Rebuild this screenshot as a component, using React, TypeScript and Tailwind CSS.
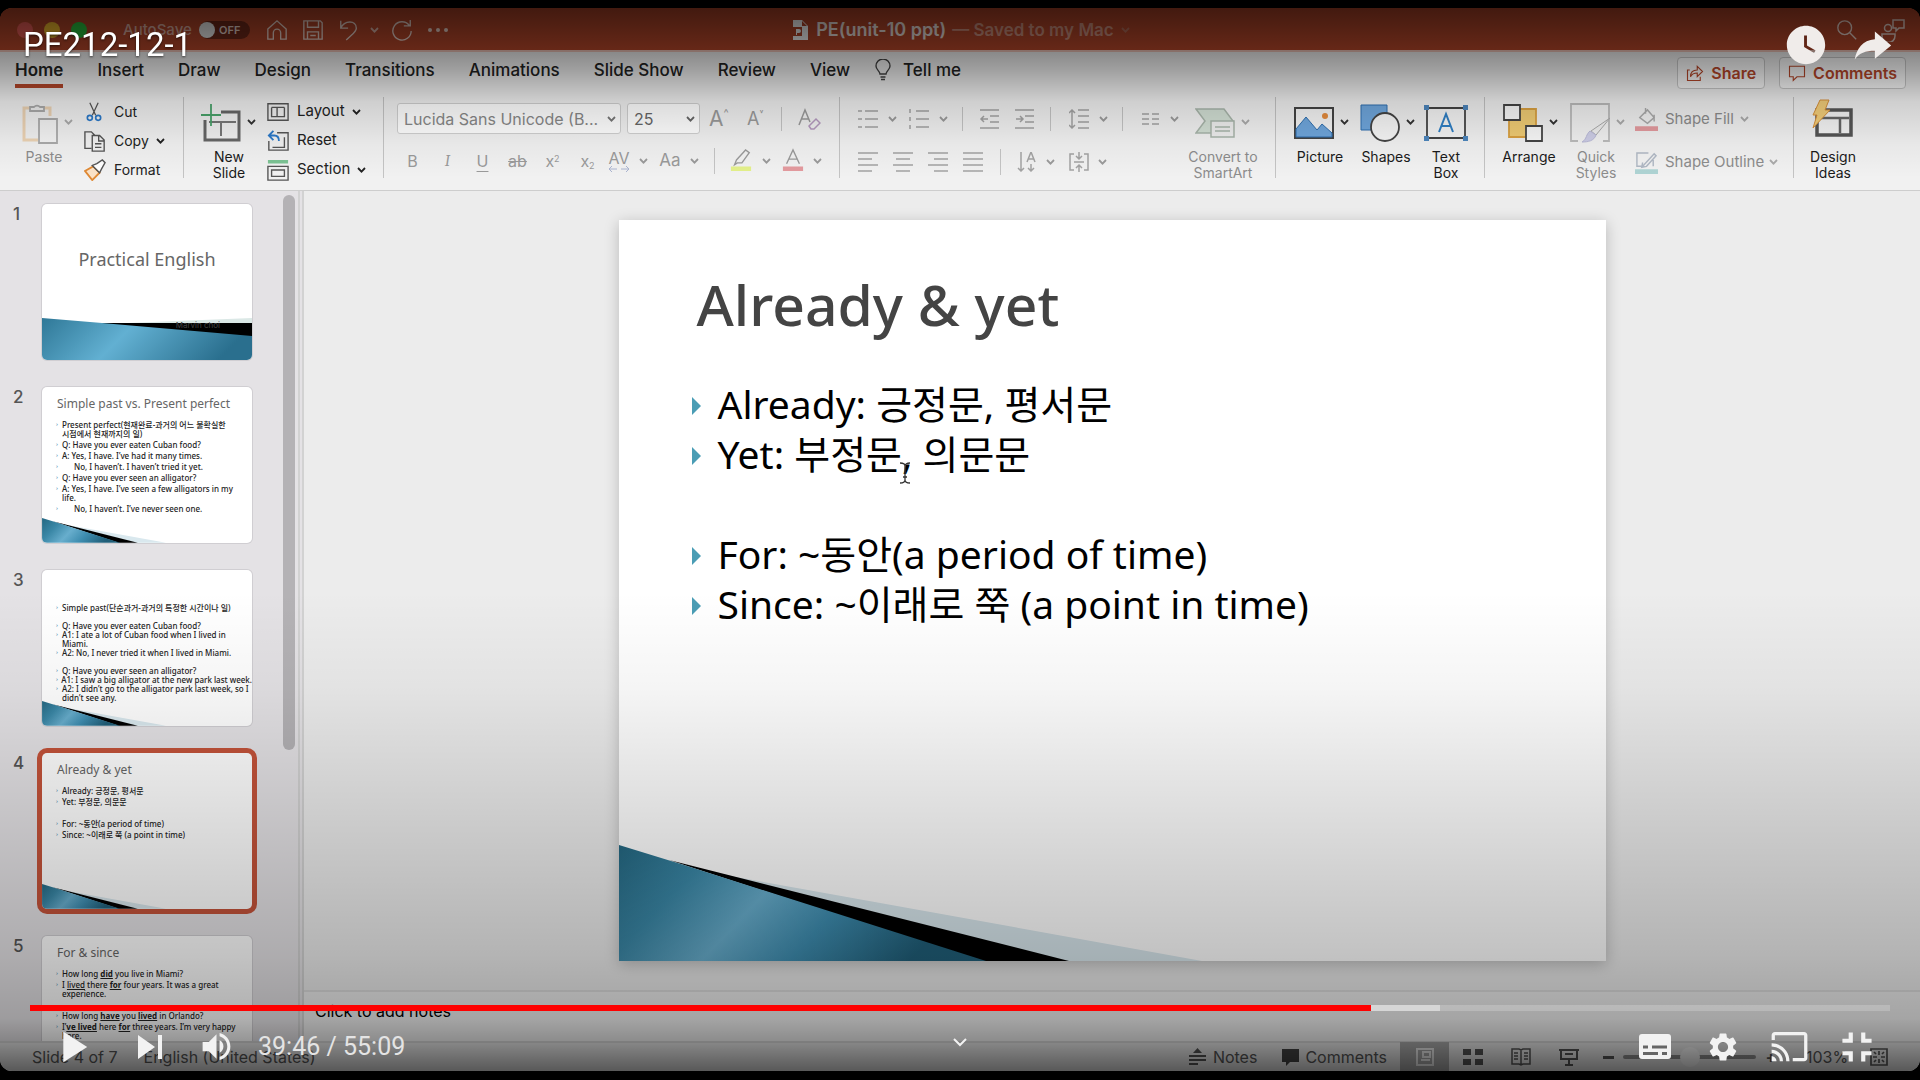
import React from "react";
import {
  MdPlayArrow,
  MdSkipNext,
  MdVolumeUp,
  MdSettings,
  MdCast,
  MdFullscreenExit,
  MdWatchLater,
} from "react-icons/md";

type Kids = { children?: React.ReactNode };

function Chev({ className = "text-[#444]" }: { className?: string }) {
  return (
    <svg viewBox="0 0 9 6" className={"h-[6px] w-[9px] shrink-0 " + className} fill="none" stroke="currentColor" strokeWidth="1.8">
      <path d="M1 1l3.5 3.6L8 1" />
    </svg>
  );
}

function Sep({ className = "" }: { className?: string }) {
  return <div className={"w-px shrink-0 bg-[#c4c4c4] " + className} />;
}

function Ico({ children, className }: Kids & { className: string }) {
  return (
    <svg viewBox="0 0 24 24" className={"shrink-0 " + className} fill="none" stroke="currentColor" strokeWidth="1.5">
      {children}
    </svg>
  );
}

/* ---------- Title bar ---------- */

function TitleBar() {
  return (
    <header className="grid h-[42px] shrink-0 grid-cols-[1fr_auto_1fr] items-center bg-[#b7472a] pt-[2px] pl-[17px] text-[#f0d8d0]">
      <div className="flex items-center">
        <div className="flex gap-[11px]">
          <button aria-label="Close" className="size-4 rounded-full bg-[#ee5f58]" />
          <button aria-label="Minimize" className="size-4 rounded-full bg-[#f5bd2e]" />
          <button aria-label="Zoom" className="size-4 rounded-full bg-[#2bc840]" />
        </div>
        <label htmlFor="autosave" className="ml-[36px] w-[66px] text-[15px] font-medium text-[#e0b0a4]">AutoSave</label>
        <span className="relative ml-[10px] flex h-[18px] w-[51px] items-center rounded-full bg-[#71291a] pr-2">
          <span className="size-4 rounded-full bg-[#f3f3f3]" />
          <span className="ml-1 text-[11px] font-semibold text-[#f0d8d0]">OFF</span>
          <input id="autosave" type="checkbox" className="absolute inset-0 size-full opacity-0" />
        </span>
        <button aria-label="Home" className="ml-[16px]">
          <Ico className="size-[22px]"><path d="M2 11L12 2l10 9v11h-6v-7a4 4 0 0 0-8 0v7H2z" /></Ico>
        </button>
        <button aria-label="Save" className="ml-[14px]">
          <Ico className="size-[22px]"><path d="M2 2h18l2 2v18H2zM6 2v7h12V2M6 22v-8h12v8M9 18h6" /></Ico>
        </button>
        <button aria-label="Undo" className="ml-[14px]">
          <Ico className="size-[22px]"><path d="M3 2v8h8M3 10c4-9 17-9 17 0 0 4-4 6-11 13" /></Ico>
        </button>
        <button aria-label="Undo history" className="ml-[10px]"><Chev className="text-[#e0b8ac]" /></button>
        <button aria-label="Redo" className="ml-[12px]">
          <Ico className="size-[22px]"><path d="M20 7A10 10 0 1 0 22 13M21 1v6.500h-7" /></Ico>
        </button>
        <button aria-label="More" className="ml-[15px] flex gap-[4px]">
          <i className="size-1 rounded-full bg-current" /><i className="size-1 rounded-full bg-current" /><i className="size-1 rounded-full bg-current" />
        </button>
      </div>
      <div className="flex items-center pr-[14px] text-lg font-semibold">
        <svg viewBox="0 0 16 20" className="mr-[7px] h-5 w-4" fill="#fff">
          <path fillRule="evenodd" d="M0 0h9l6 6v14H0v-4h9V7H0zM9 1v5h5z" />
          <path d="M3 9h3a2 2 0 0 1 0 4H4v2H3z" />
        </svg>
        <span className="text-[#f2e6e2]">PE(unit-10 ppt)</span>
        <span className="ml-[6px] text-[17px] text-[#d39482]">— Saved to my Mac</span>
        <Chev className="ml-[7px] text-[#b9705c]" />
      </div>
      <div className="flex items-center justify-end pr-[15px]">
        <button aria-label="Search"><Ico className="size-[22px]"><circle cx="9.500" cy="9.500" r="7.500" /><path d="M15 15l7 7" /></Ico></button>
        <button aria-label="Presence" className="ml-[23px]"><Ico className="size-6"><circle cx="7" cy="10" r="3.500" /><path d="M1 16h13v2a6 6 0 0 1-13 0zM12 2h11v8h-5l-3 3v-3h-3z" /></Ico></button>
      </div>
    </header>
  );
}

/* ---------- Ribbon ---------- */

const tabs = ["Home", "Insert", "Draw", "Design", "Transitions", "Animations", "Slide Show", "Review", "View"];

function TabRow() {
  return (
    <div className="flex h-[46px] items-start border-t-2 border-[#f0c4b8] pl-[15px] pr-[14px] text-[#222]">
      <nav className="flex gap-[34px] pt-[6px] text-[17px] leading-6 font-medium">
        {tabs.map((t) => (
          <button key={t} className={t === "Home" ? "border-b-4 border-[#b7472a] pb-[2px] font-semibold" : "pb-[6px]"}>{t}</button>
        ))}
      </nav>
      <button className="ml-[25px] flex items-center pt-[6px] text-[17px] leading-6 font-medium">
        <svg viewBox="0 0 16 22" className="mr-[12px] h-[22px] w-4" fill="none" stroke="#444" strokeWidth="1.4">
          <path d="M5 15c0-3-4-4-4-8a7 7 0 0 1 14 0c0 4-4 5-4 8zM5.500 18h5M6 20.500h4" />
        </svg>
        Tell me
      </button>
      <div className="ml-auto flex gap-[14px] pt-[5px] text-base font-semibold text-[#b7472a]">
        <button className="flex h-[32px] items-center gap-[7px] rounded border border-[#c9c9c9] bg-[#fbfbfb] px-[8px]">
          <Ico className="size-[18px]"><path d="M5 8H2v14h17v-5M6 17c0-7 4-9 9-9V3l7 7-7 7v-5c-4 0-7 1-9 5z" /></Ico>
          Share
        </button>
        <button className="flex h-[32px] items-center gap-[7px] rounded border border-[#c9c9c9] bg-[#fbfbfb] px-[8px]">
          <Ico className="size-[18px]"><path d="M2 3h20v14H12l-5 5v-5H2z" /></Ico>
          Comments
        </button>
      </div>
    </div>
  );
}

function SmallCmd({ label, icon, menu }: { label: string; icon: React.ReactNode; menu?: boolean }) {
  return (
    <button className="flex h-[29px] items-center text-[#222]">
      <span className="flex w-[30px] shrink-0">{icon}</span>
      {label}
      {menu && <Chev className="ml-[7px]" />}
    </button>
  );
}

function BigCmd({ label, icon, menu, dim, className = "" }: { label: string; icon: React.ReactNode; menu?: boolean; dim?: boolean; className?: string }) {
  return (
    <button className={"flex flex-col items-center " + (dim ? "text-[#8c8c8c] " : "text-[#1a1a1a] ") + className}>
      <span className="relative flex h-[53px] items-center">
        {icon}
        {menu && <Chev className={"absolute top-[23px] left-full ml-[6px] " + (dim ? "text-[#aaa]" : "text-[#333]")} />}
      </span>
      <span className="w-min text-center text-sm leading-4 whitespace-pre">{label}</span>
    </button>
  );
}

function Lines({ d, className = "" }: { d: string; className?: string }) {
  return (
    <svg viewBox="0 0 20 20" className={"size-5 shrink-0 " + className} fill="none" stroke="#a3a3a3" strokeWidth="1.500">
      <path d={d} />
    </svg>
  );
}

function Gch({ className }: { className: string }) {
  return <button aria-label="Options" className={className}><Chev className="text-[#9a9a9a]" /></button>;
}

function ToolRow() {
  return (
    <div className="flex h-[95px] items-start border-b border-[#cdcdcd] pl-[22px] text-[15px] whitespace-nowrap">
      {/* Clipboard */}
      <BigCmd
        label="Paste" dim menu className="w-[44px]"
        icon={<svg viewBox="0 0 36 42" className="-ml-2 h-[42px] w-9" fill="none" strokeWidth="1.800"><path d="M10 6H2v32h14M22 6h6v8" stroke="#ecd3b4" strokeWidth="3" /><path d="M8 9V5h4a4 4 0 0 1 6 0h4v4z" stroke="#aaa" fill="#eee" /><path d="M17 17h18v24H17z" stroke="#aaa" fill="#f3f3f3" /></svg>}
      />
      <div className="ml-[18px] w-[99px] pt-px text-sm">
        <SmallCmd label="Cut" icon={<Ico className="size-[20px]"><path d="M7 1l7 15M17 1l-7 15" stroke="#555" /><circle cx="7" cy="19" r="3" stroke="#2b79c9" strokeWidth="2" /><circle cx="17" cy="19" r="3" stroke="#2b79c9" strokeWidth="2" /></Ico>} />
        <SmallCmd label="Copy" menu icon={<Ico className="size-[22px]"><path d="M8 20H1V2h7l4 4M9 6h8l5 5v12H9zM16 6v6h6M12 15h7M12 19h7" stroke="#555" /></Ico>} />
        <SmallCmd label="Format" icon={<Ico className="size-[22px]"><path d="M1 13l8 10 8-8-7-7z" stroke="#e08a35" fill="#fbe3c8" strokeWidth="2" /><path d="M9 7l8 8 2-4 4-7-3-3-6 4z" stroke="#555" fill="#fff" /></Ico>} />
      </div>
      <Sep className="mt-px h-[81px]" />
      {/* Slides */}
      <BigCmd
        label={"New\nSlide"} menu className="ml-[15px] w-[60px]"
        icon={<svg viewBox="0 0 40 38" className="-ml-4 h-[38px] w-10" fill="none"><path d="M20 8h18v28H4V16" stroke="#666" strokeWidth="3" /><path d="M8 18h27M20 18v14" stroke="#777" strokeWidth="2" /><path d="M10 0v22M0 11h20" stroke="#49a36a" strokeWidth="1.800" /></svg>}
      />
      <div className="ml-[8px] w-[116px] pt-px">
        <SmallCmd label="Layout" menu icon={<Ico className="size-[22px]"><path d="M1 3h22v18H1zM5 7h14M5 7v10h14V7M11 7v10" stroke="#555" /></Ico>} />
        <SmallCmd label="Reset" icon={<Ico className="size-[22px]"><path d="M11 3h12v19H2V12M6 19h13V8" stroke="#555" /><path d="M7 1L2 6l5 5M2 6h6c4 0 5 2 5 6" stroke="#2b79c9" strokeWidth="2" /></Ico>} />
        <SmallCmd label="Section" menu icon={<Ico className="size-[22px]"><path d="M1 1h22v4H1z" fill="#7cc394" stroke="none" /><path d="M1 8h22v15H1zM5 12h14v7H5z" stroke="#555" /></Ico>} />
      </div>
      <Sep className="mt-px h-[81px]" />
      {/* Font */}
      <div className="flex w-[455px] flex-col gap-[13px] pt-[7px] pl-[13px] text-[#9a9a9a]">
        <div className="flex h-[31px] items-center">
          <span className="relative h-full w-[224px]">
            <select aria-label="Font" className="h-full w-full appearance-none rounded-[3px] border border-[#d0d0d0] bg-white px-[6px] text-base text-[#888]">
              <option>Lucida Sans Unicode (B...</option>
            </select>
            <Chev className="pointer-events-none absolute top-[13px] right-[5px] text-[#777]" />
          </span>
          <span className="relative ml-[6px] h-full w-[73px]">
            <select aria-label="Font size" className="h-full w-full appearance-none rounded-[3px] border border-[#d0d0d0] bg-white px-[6px] text-base text-[#666]">
              <option>25</option>
            </select>
            <Chev className="pointer-events-none absolute top-[13px] right-[5px] text-[#666]" />
          </span>
          <button aria-label="Increase font size" className="ml-[9px] flex w-[22px] text-[21px] leading-6">A<span className="text-[11px] leading-3">^</span></button>
          <button aria-label="Decrease font size" className="ml-[16px] flex w-[20px] text-[18px] leading-6">A<span className="text-[9px] leading-3">˅</span></button>
          <Sep className="ml-[14px] h-[24px]" />
          <button aria-label="Clear formatting" className="ml-[15px]">
            <Ico className="size-[24px]"><path d="M2 18L8 3l5 12M4 12h8" /><path d="M12 19l7-7 4 4-6 6h-3z" stroke="#b59abf" /></Ico>
          </button>
        </div>
        <div className="flex h-[27px] items-center text-base">
          <div className="-ml-[2px] grid grid-cols-[repeat(6,35px)]">
            <button>B</button>
            <button className="font-serif italic">I</button>
            <button className="underline underline-offset-4">U</button>
            <button className="line-through">ab</button>
            <button>x<sup className="text-[9px]">2</sup></button>
            <button>x<sub className="text-[9px]">2</sub></button>
          </div>
          <button aria-label="Character spacing" className="ml-[2px] flex w-[24px] flex-col items-center text-base leading-4">
            AV
            <svg viewBox="0 0 22 6" className="h-[6px] w-[22px]" fill="none" stroke="#aab4d0"><path d="M4 0L1 3l3 3M1 3h8M18 0l3 3-3 3M21 3h-8" /></svg>
          </button>
          <Gch className="ml-[8px]" />
          <button aria-label="Change case" className="ml-[10px] w-[24px] text-[17px]">Aa</button>
          <Gch className="ml-[8px]" />
          <Sep className="ml-[15px] h-[26px]" />
          <button aria-label="Highlight" className="ml-[15px]">
            <Ico className="h-[26px] w-[22px]"><path d="M7 11L17 0l4 3-8 11H8l-3 2z" /><path d="M1 18h22v5H1z" fill="#e3f08a" stroke="none" /></Ico>
          </button>
          <Gch className="ml-[10px]" />
          <button aria-label="Font color" className="ml-[11px]">
            <Ico className="h-[26px] w-[22px]"><path d="M5 15L12 0l7 15M7 10h10" /><path d="M1 18h22v5H1z" fill="#e39a9e" stroke="none" /></Ico>
          </button>
          <Gch className="ml-[9px]" />
        </div>
      </div>
      <Sep className="mt-px h-[81px]" />
      {/* Paragraph */}
      <div className="flex w-[347px] flex-col gap-[17px] pt-[10px] pl-[18px]">
        <div className="flex h-[26px] items-center">
          <Lines d="M0 2h4M0 10h4M0 18h4M7 2h13M7 10h13M7 18h13" />
          <Gch className="ml-[10px]" />
          <Lines d="M1 0v4M1 8v4M1 16v4M7 2h13M7 10h13M7 18h13" className="ml-[12px]" />
          <Gch className="ml-[10px]" />
          <Sep className="ml-[14px] h-[24px]" />
          <Lines d="M1 1h19M11 7h9M11 13h9M1 19h19M9 10H2M5 7l-3 3 3 3" className="ml-[16px]" />
          <Lines d="M1 1h19M11 7h9M11 13h9M1 19h19M2 10h7M6 7l3 3-3 3" className="ml-[15px]" />
          <Sep className="ml-[16px] h-[24px]" />
          <Lines d="M9 1h11M9 7h11M9 13h11M9 19h11M3 1v18M0 4l3-3 3 3M0 16l3 3 3-3" className="ml-[18px]" />
          <Gch className="ml-[10px]" />
          <Sep className="ml-[14px] h-[24px]" />
          <Lines d="M2 5h7M2 10h7M2 15h7M12 5h7M12 10h7M12 15h7" className="ml-[17px]" />
          <Gch className="ml-[10px]" />
        </div>
        <div className="flex h-[26px] items-center">
          <Lines d="M0 1h20M0 7h14M0 13h20M0 19h14" />
          <Lines d="M0 1h20M3 7h14M0 13h20M3 19h14" className="ml-[15px]" />
          <Lines d="M0 1h20M6 7h14M0 13h20M6 19h14" className="ml-[15px]" />
          <Lines d="M0 1h20M0 7h20M0 13h20M0 19h20" className="ml-[15px]" />
          <Sep className="ml-[17px] h-[26px]" />
          <Lines d="M4 0v19M1 16l3 3 3-3M10 10l4-10 4 10M11 7h6M14 12v7M11 16l3 3 3-3" className="ml-[16px]" />
          <Gch className="ml-[9px]" />
          <Lines d="M5 2H1v16h4M15 2h4v16h-4M10 0v7M10 13v7M5 10h10M7 4l3 3 3-3M7 16l3-3 3 3" className="ml-[14px]" />
          <Gch className="ml-[9px]" />
        </div>
      </div>
      <BigCmd
        label={"Convert to\nSmartArt"} dim menu className="w-[72px]"
        icon={<svg viewBox="0 0 40 32" className="-ml-4 h-8 w-10" fill="#d2dfd4" stroke="#a8b5aa" strokeWidth="1.500"><path d="M1 2h28l9 12-9 12H1l9-12z" /><path d="M16 14h23v16H16z" fill="#eee" /><path d="M20 20h15M20 24h15" /></svg>}
      />
      <Sep className="mt-px ml-[16px] h-[81px]" />
      {/* Insert */}
      <BigCmd
        label="Picture" menu className="ml-[19px] w-[50px]"
        icon={<svg viewBox="0 0 40 32" className="-ml-3 h-8 w-10" fill="none"><path d="M1 1h38v30H1z" stroke="#444" strokeWidth="2" fill="#f4f4f4" /><path d="M2 22L12 10l11 13 5-6 10 9v4H2z" fill="#6fa6dc" stroke="#2f6faf" /><circle cx="31" cy="9" r="3" fill="#e58c3e" /></svg>}
      />
      <BigCmd
        label="Shapes" menu className="ml-[14px] w-[54px]"
        icon={<svg viewBox="0 0 40 38" className="-ml-3 h-[38px] w-10"><path d="M1 1h26v25H1z" fill="#6fa6dc" stroke="#2f6faf" /><circle cx="25" cy="23" r="14" fill="#f6f6f6" stroke="#444" strokeWidth="1.800" /></svg>}
      />
      <BigCmd
        label={"Text\nBox"} className="ml-[10px] w-[46px]"
        icon={<svg viewBox="0 0 44 36" className="h-9 w-11"><path d="M3 3h38v30H3z" fill="#f4f4f4" stroke="#444" strokeWidth="1.800" /><path d="M15 27l7-18 7 18M17 21h10" fill="none" stroke="#2f7fc4" strokeWidth="2" /><path d="M0 0h5v5H0zM39 0h5v5h-5zM0 31h5v5H0zM39 31h5v5h-5z" fill="#4d86bd" /></svg>}
      />
      <Sep className="mt-px ml-[15px] h-[81px]" />
      {/* Drawing */}
      <BigCmd
        label="Arrange" menu className="ml-[17px] w-[54px]"
        icon={<svg viewBox="0 0 40 38" className="-ml-3 h-[38px] w-10" strokeWidth="1.800"><path d="M6 5h27v28H6z" fill="#efcb73" stroke="#d9a040" /><path d="M1 1h16v15H1zM23 22h16v15H23z" fill="#f8f8f8" stroke="#444" /></svg>}
      />
      <BigCmd
        label={"Quick\nStyles"} dim menu className="ml-[19px] w-[42px]"
        icon={<svg viewBox="0 0 40 40" className="-ml-3 h-10 w-10"><path d="M8 38H1V1h38v37h-6" fill="none" stroke="#bbb" strokeWidth="1.800" /><path d="M40 15L26 32l-5-4z" fill="#eee" stroke="#aaa" /><path d="M20 28l6 4c-2 6-8 7-14 7 5-3 4-8 8-11z" fill="#cdcde6" stroke="#b9b9d6" /></svg>}
      />
      <div className="ml-[18px] flex w-[158px] flex-col gap-[9px] pt-[6px] text-[#8c8c8c]">
        <button className="flex h-[34px] items-center">
          <svg viewBox="0 0 24 24" className="mr-[7px] size-[23px]" fill="none" stroke="#aaa" strokeWidth="1.500"><path d="M5 10l8-8 7 8-7 6zM11 0v6M20 7v7" /><path d="M0 19h24v5H0z" fill="#e39a9e" stroke="none" /></svg>
          Shape Fill <Chev className="ml-[6px] text-[#aaa]" />
        </button>
        <button className="flex h-[34px] items-center">
          <svg viewBox="0 0 24 24" className="mr-[7px] size-[23px]" fill="none" stroke="#b0b8c4" strokeWidth="1.500"><path d="M14 2H2v14h6l12-13 2 2-10 11-5 1 1-5M19 8v8" /><path d="M0 19h24v5H0z" fill="#aed3d3" stroke="none" /></svg>
          Shape Outline <Chev className="ml-[5px] text-[#aaa]" />
        </button>
      </div>
      <Sep className="mt-px h-[81px]" />
      <BigCmd
        label={"Design\nIdeas"} className="ml-[14px] w-[50px]"
        icon={<svg viewBox="0 0 42 40" className="-mt-2 h-10 w-[42px]"><path d="M5 11h34v25H5z" fill="#f4f4f4" stroke="#555" strokeWidth="3.500" /><path d="M9 19h28M28 19v15" stroke="#666" strokeWidth="2.500" /><path d="M8 1h9l-4 10h5L1 29l4-13H1z" fill="#f5cf7a" stroke="#d9913a" /></svg>}
      />
    </div>
  );
}

/* ---------- Slides ---------- */

function Corner({ id }: { id: string }) {
  return (
    <svg viewBox="0 0 987 116" className="absolute bottom-0 left-0 w-full">
      <defs>
        <linearGradient id={id} x1="0" y1="0" x2="1" y2="0.3">
          <stop offset="0" stopColor="#246781" />
          <stop offset="0.25" stopColor="#3a87a6" />
          <stop offset="0.48" stopColor="#68aecd" />
          <stop offset="0.7" stopColor="#3e8db0" />
          <stop offset="1" stopColor="#205e78" />
        </linearGradient>
      </defs>
      <path d="M100 29L583 116H440z" fill="#d9e8ee" />
      <path d="M50 15L450 116H360z" fill="#000" />
      <path d="M0 0L65 20L367 116H0z" fill={`url(#${id})`} />
    </svg>
  );
}

function Thumb({ n, selected, children }: Kids & { n: number; selected?: boolean }) {
  return (
    <li className="flex h-[183px] shrink-0">
      <span className="w-[42px] pr-1 pl-[13px] text-[17px] leading-5 font-medium text-[#555]">{n}</span>
      <button
        className={
          "relative block h-[156px] w-[210px] shrink-0 overflow-hidden rounded-[5px] bg-white text-left ring-offset-0 " +
          (selected ? "ring-[5px] ring-[#c4533a]" : "ring-1 ring-[#d0ced2]")
        }
      >
        {children}
      </button>
    </li>
  );
}

function ThumbText({ title, gap, lines, id }: { title?: string; gap?: boolean; lines: React.ReactNode[]; id: string }) {
  return (
    <span className="block h-full font-['Noto_Sans','Noto_Sans_CJK_KR',sans-serif]">
      <Corner id={id} />
      <span className="relative block h-[33px] pt-[9px] pl-[15px] text-[12px] leading-4 whitespace-nowrap text-[#666]">{title}</span>
      <span className={"relative flex flex-col pl-[14px] text-[8px] leading-[9px] font-medium whitespace-nowrap text-[#222] " + (gap ? "gap-[2px]" : "")}>
        {lines.map((l, i) => (
          <span key={i} className="flex min-h-[9px]">
            <span className="w-[6px] text-[6px] text-[#58a]">{l ? "›" : ""}</span>
            <span>{l}</span>
          </span>
        ))}
      </span>
    </span>
  );
}

function Sidebar() {
  return (
    <aside className="flex w-[304px] shrink-0 overflow-hidden border-r-[6px] border-double border-[#d2d2d2] bg-[#e4e2e5]">
      <ol className="flex flex-1 flex-col pt-[13px]">
        <Thumb n={1}>
          <span className="block h-full pt-[43px] text-center font-['Noto_Sans',sans-serif] text-lg leading-6 text-[#666]">Practical English</span>
          <svg viewBox="0 0 210 42" className="absolute bottom-0 left-0 w-full">
            <defs>
              <linearGradient id="cover" x1="0" y1="0" x2="1" y2="0.200">
                <stop offset="0" stopColor="#2f7897" />
                <stop offset="0.450" stopColor="#62b0d2" />
                <stop offset="1" stopColor="#2a6f8e" />
              </linearGradient>
            </defs>
            <path d="M60 6L210 0v8z" fill="#dbe8e6" />
            <path d="M50 5L210 5v14z" fill="#000" />
            <path d="M0 0L60 5L210 18V42H0z" fill="url(#cover)" />
          </svg>
          <span className="absolute right-[32px] bottom-[30px] text-[8px] leading-[9px] text-[#444]">Marvin choi</span>
        </Thumb>
        <Thumb n={2}>
          <ThumbText
            id="c2" gap title="Simple past vs. Present perfect"
            lines={[
              <>Present perfect(현재완료-과거의 어느 불확실한<br />시점에서 현재까지의 일)</>,
              "Q: Have you ever eaten Cuban food?",
              "A: Yes, I have. I’ve had it many times.",
              <span className="pl-3">No, I haven’t. I haven’t tried it yet.</span>,
              "Q: Have you ever seen an alligator?",
              <>A: Yes, I have. I’ve seen a few alligators in my<br />life.</>,
              <span className="pl-3">No, I haven’t. I’ve never seen one.</span>,
            ]}
          />
        </Thumb>
        <Thumb n={3}>
          <ThumbText
            id="c3"
            lines={[
              "Simple past(단순과거-과거의 특정한 시간이나 일)",
              "",
              "Q: Have you ever eaten Cuban food?",
              <>A1: I ate a lot of Cuban food when I lived in<br />Miami.</>,
              "A2: No, I never tried it when I lived in Miami.",
              "",
              "Q: Have you ever seen an alligator?",
              "A1: I saw a big alligator at the new park last week.",
              <>A2: I didn’t go to the alligator park last week, so I<br />didn’t see any.</>,
            ]}
          />
        </Thumb>
        <Thumb n={4} selected>
          <ThumbText
            id="c4" gap title="Already & yet"
            lines={["Already: 긍정문, 평서문", "Yet: 부정문, 의문문", "", "For: ~동안(a period of time)", "Since: ~이래로 쭉 (a point in time)"]}
          />
        </Thumb>
        <Thumb n={5}>
          <ThumbText
            id="c5" gap title="For & since"
            lines={[
              <>How long <b><u>did</u></b> you live in Miami?</>,
              <>I <u>lived</u> there <b><u>for</u></b> four years. It was a great<br />experience.</>,
              "",
              <>How long <b><u>have</u></b> you <b><u>lived</u></b> in Orlando?</>,
              <>I’<b><u>ve lived</u></b> here <b><u>for</u></b> three years. I’m very happy<br />here.</>,
            ]}
          />
        </Thumb>
      </ol>
      <div className="mt-[4px] mr-[3px] h-[555px] w-[12px] rounded-full bg-[#b4b2b5]" />
    </aside>
  );
}

const bullets = ["Already: 긍정문, 평서문", "Yet: 부정문, 의문문", "", "For: ~동안(a period of time)", "Since: ~이래로 쭉 (a point in time)"];

function Workspace() {
  return (
    <main className="flex min-w-0 flex-1 flex-col bg-[#ececec]">
      <div className="flex min-h-0 flex-1 justify-center pt-[29px] pb-[29px]">
        <article className="relative aspect-[987/741] h-full bg-white pl-[73px] font-['Noto_Sans','Noto_Sans_CJK_KR',sans-serif] whitespace-nowrap shadow-[0_3px_14px_rgba(0,0,0,0.22)]">
          <Corner id="main" />
          <h1 className="relative pt-[48px] pl-[5px] text-[57px] leading-[72px] font-medium text-[#444]">Already &amp; yet</h1>
          <ul className="relative pt-[39px] text-[39px] leading-[50px] text-black">
            {bullets.map((b, i) => (
              <li key={i} className="flex h-[50px] items-center">
                {b && (
                  <svg viewBox="0 0 9 18" className="mt-[4px] mr-[17px] h-[18px] w-[9px]"><path d="M0 0l9 9-9 9z" fill="#4a9db5" /></svg>
                )}
                {b}
              </li>
            ))}
          </ul>
          <svg viewBox="0 0 10 22" className="absolute top-[242px] left-[281px] h-[22px] w-[10px]" fill="none" stroke="#333" strokeWidth="1.300">
            <path d="M0 1c3 0 5 1 5 3 0-2 2-3 5-3M5 3v16M0 21c3 0 5-1 5-3 0 2 2 3 5 3M3 15h4" />
          </svg>
        </article>
      </div>
      <div className="h-[51px] shrink-0 border-t-2 border-[#dedede] bg-[#efefef] pt-[7px] pl-[11px]">
        <input aria-label="Notes" defaultValue="Click to add notes" className="w-full bg-transparent text-base text-black outline-none" />
      </div>
    </main>
  );
}

function StatusBar() {
  return (
    <footer className="flex h-[30px] shrink-0 items-center border-t-2 border-[#d6d6d6] bg-[#e9e9e9] pr-[32px] pl-[32px] text-base text-[#555]">
      <span>Slide 4 of 7</span>
      <span className="ml-[26px]">English (United States)</span>
      <button className="ml-auto flex items-center gap-[7px]">
        <svg viewBox="0 0 17 18" className="h-[18px] w-[17px]" fill="none" stroke="#555" strokeWidth="2"><path d="M4 5l4.500-5L13 5z" fill="#555" stroke="none" /><path d="M0 8h17M0 12h17M0 16h9" /></svg>
        Notes
      </button>
      <button className="ml-[25px] flex items-center gap-[6px]">
        <svg viewBox="0 0 17 17" className="size-[17px]" fill="#444"><path d="M0 0h17v13H8l-4 4v-4H0z" /></svg>
        Comments
      </button>
      <button aria-label="Normal view" className="ml-[13px] flex h-[30px] w-[49px] items-center justify-center bg-[#aaa]">
        <svg viewBox="0 0 18 18" className="size-[18px]" fill="none" stroke="#eee" strokeWidth="2"><path d="M1 1h16v16H1zM7 4h7v5H7zM5 12h9" /></svg>
      </button>
      <button aria-label="Slide sorter" className="ml-[14px]">
        <svg viewBox="0 0 20 16" className="h-4 w-5" fill="#555"><path d="M0 0h8v6H0zM12 0h8v6h-8zM0 10h8v6H0zM12 10h8v6h-8z" /></svg>
      </button>
      <button aria-label="Reading view" className="ml-[28px]">
        <svg viewBox="0 0 20 18" className="h-[18px] w-5" fill="none" stroke="#555" strokeWidth="1.500"><path d="M1 1h7l2 1 2-1h7v15h-7l-2 1-2-1H1zM10 2v15M3 5h4M3 8h4M3 11h4M13 5h4M13 8h4M13 11h4" /></svg>
      </button>
      <button aria-label="Slide show" className="ml-[28px]">
        <svg viewBox="0 0 20 18" className="h-[18px] w-5" fill="none" stroke="#555" strokeWidth="2"><path d="M0 2h20M2 2v9h16V2M6 6h8M10 11v6M6 17h8" /></svg>
      </button>
      <button aria-label="Zoom out" className="ml-[24px] h-[3px] w-[11px] bg-[#555]" />
      <span className="relative ml-[9px] flex h-5 w-[133px] items-center justify-center">
        <span className="absolute top-2 h-1 w-full rounded-full bg-[#8e8e8e]" />
        <span className="relative size-5 rounded-full bg-[#f4f4f4]" />
        <input aria-label="Zoom" type="range" className="absolute inset-0 w-full opacity-0" />
      </span>
      <button aria-label="Zoom in" className="ml-[9px] w-[12px] leading-5 font-bold">+</button>
      <span className="ml-[29px] w-[46px] text-base">103%</span>
      <button aria-label="Fit slide" className="ml-[18px]">
        <svg viewBox="0 0 18 18" className="size-[18px]" fill="none" stroke="#555" strokeWidth="1.700"><path d="M1 1h16v16H1zM9 3v4M9 11v4M3 9h4M11 9h4M4 4l2 2M14 4l-2 2M4 14l2-2M14 14l-2-2" /></svg>
      </button>
    </footer>
  );
}

/* ---------- Video player chrome ---------- */

function Player() {
  return (
    <div className="absolute inset-0 flex flex-col justify-between font-[Roboto,sans-serif] text-[#f2f2f2]">
      <div className="flex justify-between pt-[25px] pr-[23px] pl-[23px]">
        <h2 className="text-[33px] leading-10 text-white drop-shadow-[0_1px_1px_rgba(0,0,0,0.6)]">PE212-12-1</h2>
        <div className="flex gap-[18px]">
          <button aria-label="Watch later" className="-mt-[3px] text-[#f0ecea]"><MdWatchLater size={46} /></button>
          <button aria-label="Share" className="-mt-[3px] text-[#f0ecea]">
            <svg viewBox="0 0 24 24" className="h-[46px] w-[50px]" fill="currentColor"><path d="M13.500 9V5l8.500 7.200-8.500 7V15c-5 0-8 1.200-10.500 4.500C4 14 7 9.500 13.500 9z" /></svg>
          </button>
        </div>
      </div>
      <div className="px-[30px]">
        <div className="relative flex h-[6px] bg-white/20">
          <div className="bg-[#ff0000]" style={{ width: "72.1%" }} />
          <div className="bg-[#d6d6d6]" style={{ width: "3.7%" }} />
          <input aria-label="Seek" type="range" className="absolute inset-0 w-full opacity-0" />
        </div>
        <div className="grid h-[69px] grid-cols-[1fr_auto_1fr] items-center pt-[2px]">
          <div className="flex items-center pl-[16px]">
            <button aria-label="Play"><MdPlayArrow size={52} /></button>
            <button aria-label="Next" className="ml-[28px]"><MdSkipNext size={48} /></button>
            <button aria-label="Mute" className="ml-[24px]"><MdVolumeUp size={37} /></button>
            <span className="ml-[23px] text-[25px] text-[#e4e4e4]">39:46 / 55:09</span>
          </div>
          <button aria-label="More videos" className="pb-[9px]">
            <svg viewBox="0 0 14 9" className="h-[9px] w-[14px]" fill="none" stroke="currentColor" strokeWidth="2"><path d="M1 1l6 6 6-6" /></svg>
          </button>
          <div className="flex items-center justify-end pr-[8px]">
            <button aria-label="Subtitles">
              <svg viewBox="0 0 32 25" className="h-[25px] w-8"><rect width="32" height="25" rx="3" fill="currentColor" /><path d="M4 13h5M13 13h15M4 19.500h15M23 19.500h5" stroke="#666" strokeWidth="3" /></svg>
            </button>
            <button aria-label="Settings" className="ml-[35px]"><MdSettings size={34} /></button>
            <button aria-label="Cast" className="ml-[30px]"><MdCast size={39} /></button>
            <button aria-label="Exit full screen" className="ml-[23px]"><MdFullscreenExit size={50} /></button>
          </div>
        </div>
      </div>
    </div>
  );
}

export default function App() {
  return (
    <div className="relative flex h-screen w-full flex-col overflow-hidden bg-black pt-2 pb-[9px] font-[Inter,sans-serif]">
      <div className="relative flex min-h-0 flex-1 flex-col overflow-hidden rounded-[12px]">
        <TitleBar />
        <div className="shrink-0 bg-[#f1f1f1]">
          <TabRow />
          <ToolRow />
        </div>
        <div className="flex min-h-0 flex-1">
          <Sidebar />
          <Workspace />
        </div>
        <StatusBar />
        <div className="pointer-events-none absolute inset-x-0 top-0 h-[170px] bg-[linear-gradient(to_bottom,rgba(0,0,0,0.64)_0%,rgba(0,0,0,0.44)_25%,rgba(0,0,0,0.34)_36%,rgba(0,0,0,0.14)_55%,rgba(0,0,0,0.04)_80%,rgba(0,0,0,0)_100%)]" />
        <div className="pointer-events-none absolute inset-x-0 bottom-0 h-[480px] bg-[linear-gradient(to_bottom,rgba(0,0,0,0)_0%,rgba(0,0,0,0.04)_20%,rgba(0,0,0,0.11)_40%,rgba(0,0,0,0.24)_76%,rgba(0,0,0,0.31)_89%,rgba(0,0,0,0.42)_94%,rgba(0,0,0,0.62)_100%)]" />
      </div>
      <Player />
    </div>
  );
}
